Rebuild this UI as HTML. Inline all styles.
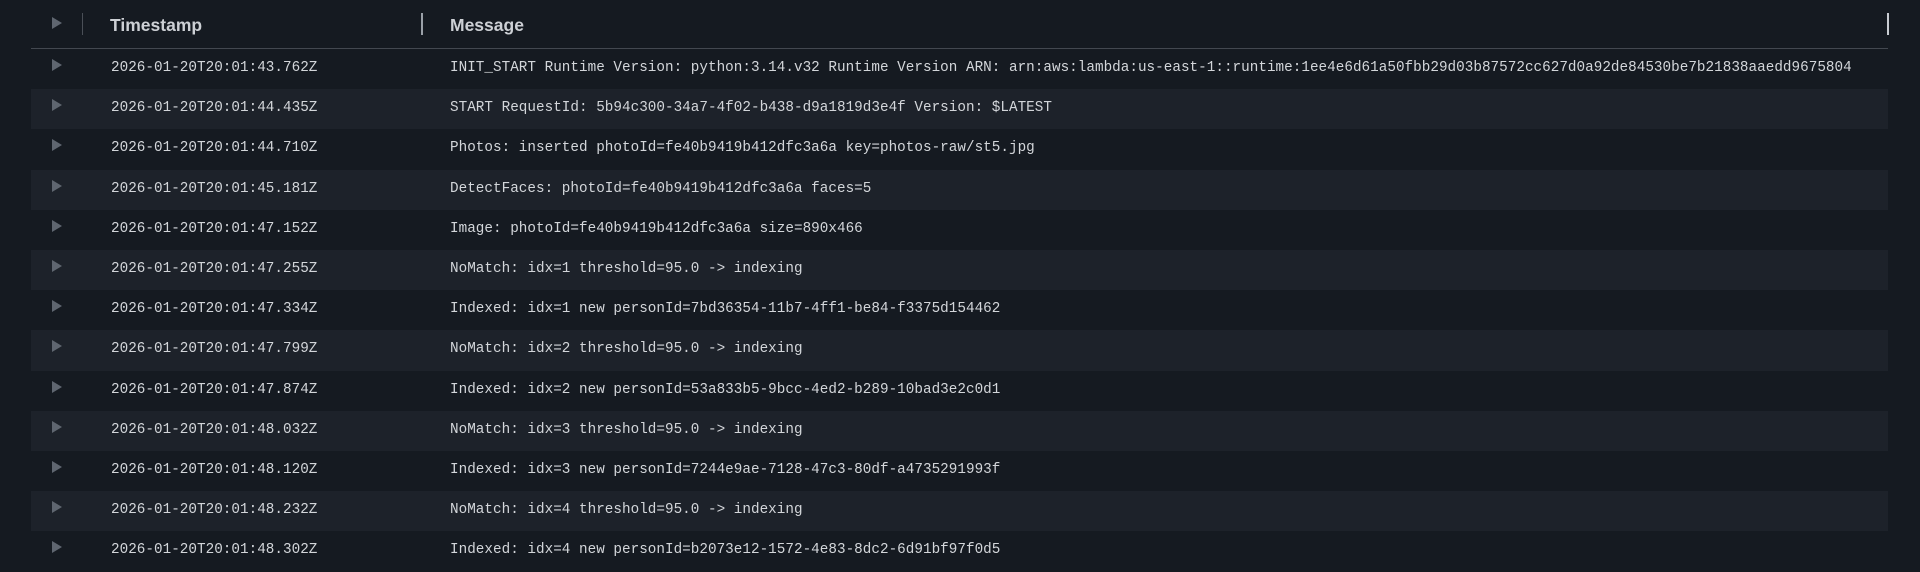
<!DOCTYPE html>
<html><head><meta charset="utf-8"><style>
html,body{margin:0;padding:0;width:1920px;height:556px;overflow:hidden;background:#151a21;}
.hd{position:absolute;left:31px;top:0;width:1857px;height:48px;border-bottom:1px solid #434850;}
.hd span{position:absolute;top:15px;font:bold 17.5px "Liberation Sans",sans-serif;color:#cdd0d5;}
.div{position:absolute;top:13px;width:2px;height:22px;background:#5a5f67;}
.arr{position:absolute;width:0;height:0;border-top:6px solid transparent;border-bottom:6px solid transparent;border-left:10px solid #5f6670;}
.row{position:absolute;left:31px;width:1857px;height:40.2px;}
.row.s{background:#1d222a;}
.row .t,.row .m{position:absolute;top:11px;font:14.3px "Liberation Mono",monospace;color:#d3d6da;white-space:pre;letter-spacing:0.02px;}
.row .t{left:80px;}
.row .m{left:419px;}
.row .arr{left:21px;top:10px;}
</style></head><body>
<div class="hd">
<div class="arr" style="left:21px;top:17px"></div>
<div class="div" style="left:51px;background:#4a4f57;width:1px"></div>
<span style="left:79px">Timestamp</span>
<div class="div" style="left:390px;background:#9aa0a8"></div>
<span style="left:419px">Message</span>
<div class="div" style="left:1856px;background:#c8ccd2"></div>
</div>
<div class="row" style="top:49px"><div class="arr"></div><div class="t">2026-01-20T20:01:43.762Z</div><div class="m">INIT_START Runtime Version: python:3.14.v32 Runtime Version ARN: arn:aws:lambda:us-east-1::runtime:1ee4e6d61a50fbb29d03b87572cc627d0a92de84530be7b21838aaedd9675804</div></div>
<div class="row s" style="top:89.2px"><div class="arr"></div><div class="t">2026-01-20T20:01:44.435Z</div><div class="m">START RequestId: 5b94c300-34a7-4f02-b438-d9a1819d3e4f Version: $LATEST</div></div>
<div class="row" style="top:129.4px"><div class="arr"></div><div class="t">2026-01-20T20:01:44.710Z</div><div class="m">Photos: inserted photoId=fe40b9419b412dfc3a6a key=photos-raw/st5.jpg</div></div>
<div class="row s" style="top:169.6px"><div class="arr"></div><div class="t">2026-01-20T20:01:45.181Z</div><div class="m">DetectFaces: photoId=fe40b9419b412dfc3a6a faces=5</div></div>
<div class="row" style="top:209.8px"><div class="arr"></div><div class="t">2026-01-20T20:01:47.152Z</div><div class="m">Image: photoId=fe40b9419b412dfc3a6a size=890x466</div></div>
<div class="row s" style="top:250px"><div class="arr"></div><div class="t">2026-01-20T20:01:47.255Z</div><div class="m">NoMatch: idx=1 threshold=95.0 -&gt; indexing</div></div>
<div class="row" style="top:290.2px"><div class="arr"></div><div class="t">2026-01-20T20:01:47.334Z</div><div class="m">Indexed: idx=1 new personId=7bd36354-11b7-4ff1-be84-f3375d154462</div></div>
<div class="row s" style="top:330.4px"><div class="arr"></div><div class="t">2026-01-20T20:01:47.799Z</div><div class="m">NoMatch: idx=2 threshold=95.0 -&gt; indexing</div></div>
<div class="row" style="top:370.6px"><div class="arr"></div><div class="t">2026-01-20T20:01:47.874Z</div><div class="m">Indexed: idx=2 new personId=53a833b5-9bcc-4ed2-b289-10bad3e2c0d1</div></div>
<div class="row s" style="top:410.8px"><div class="arr"></div><div class="t">2026-01-20T20:01:48.032Z</div><div class="m">NoMatch: idx=3 threshold=95.0 -&gt; indexing</div></div>
<div class="row" style="top:451px"><div class="arr"></div><div class="t">2026-01-20T20:01:48.120Z</div><div class="m">Indexed: idx=3 new personId=7244e9ae-7128-47c3-80df-a4735291993f</div></div>
<div class="row s" style="top:491.2px"><div class="arr"></div><div class="t">2026-01-20T20:01:48.232Z</div><div class="m">NoMatch: idx=4 threshold=95.0 -&gt; indexing</div></div>
<div class="row" style="top:531.4px"><div class="arr"></div><div class="t">2026-01-20T20:01:48.302Z</div><div class="m">Indexed: idx=4 new personId=b2073e12-1572-4e83-8dc2-6d91bf97f0d5</div></div>
</body></html>
